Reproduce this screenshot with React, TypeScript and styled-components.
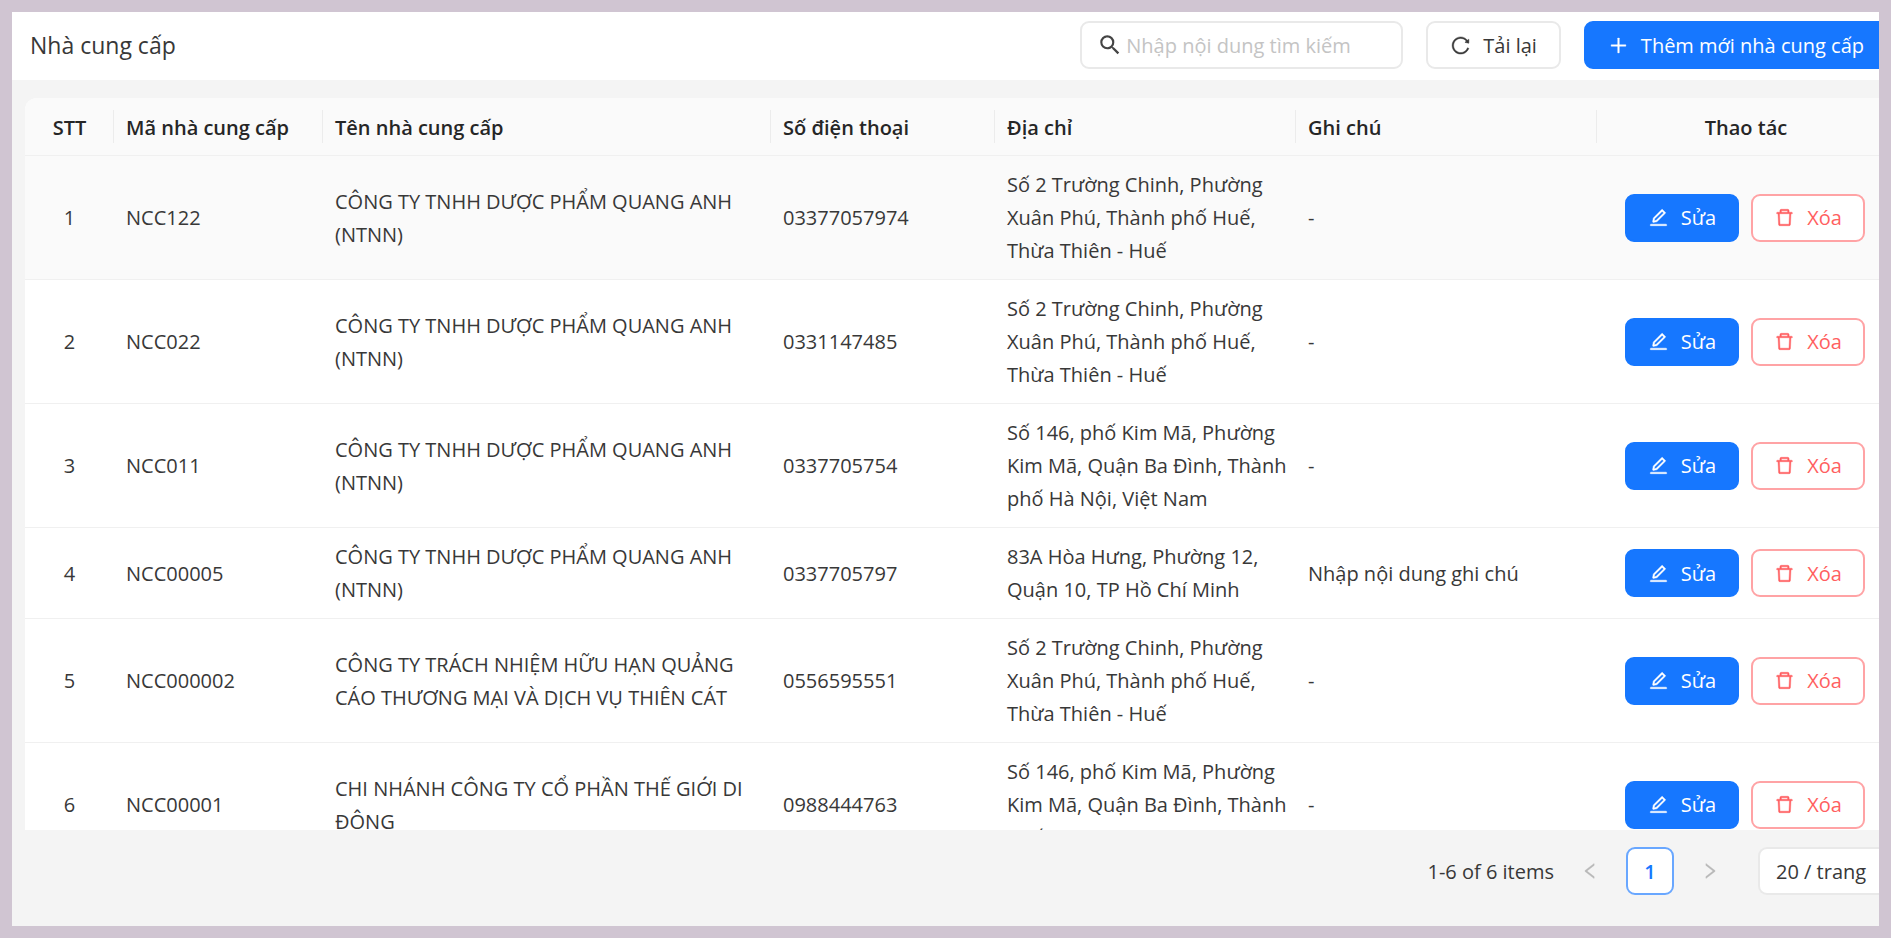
import React from "react";
import styled, { createGlobalStyle, css } from "styled-components";
import {
  AiOutlineDelete,
  AiOutlineEdit,
  AiOutlineLeft,
  AiOutlinePlus,
  AiOutlineReload,
  AiOutlineRight,
} from "react-icons/ai";
import { MdSearch } from "react-icons/md";

const GlobalStyle = createGlobalStyle`
  *, *::before, *::after { box-sizing: border-box; }
  html, body, #root { height: 100%; }
  body {
    margin: 0;
    font-family: "Open Sans", "Noto Sans", sans-serif;
    font-size: 20px;
    line-height: 33px;
    color: #383838;
  }
  button, input, select { font: inherit; color: inherit; }
`;

const Frame = styled.div`
  height: 100%;
  min-height: 480px;
  border: 12px solid #d0c5d2;
  background: #f4f4f4;
  display: flex;
  flex-direction: column;
  overflow: hidden;
`;

const Toolbar = styled.header`
  display: flex;
  align-items: center;
  gap: 23px;
  padding: 9px 0 11px 18px;
  background: #fff;
`;

const Title = styled.h1`
  flex: 1;
  margin: 0;
  font-size: 23px;
  font-weight: 400;
`;

const SearchBox = styled.label`
  display: flex;
  align-items: center;
  gap: 3px;
  width: 323px;
  height: 48px;
  padding: 0 15px;
  border: 2px solid #e9e9e9;
  border-radius: 9px;
  background: #fff;
  svg { flex: none; font-size: 26px; color: #444; }
`;

const SearchInput = styled.input`
  flex: 1;
  min-width: 0;
  padding: 0;
  border: 0;
  outline: 0;
  background: transparent;
  &::placeholder { color: #c4c4c4; opacity: 1; }
`;

const variants = {
  plain: css`
    background: #fff;
    border-color: #e9e9e9;
  `,
  primary: css`
    background: #1677ff;
    border-color: #1677ff;
    color: #fff;
  `,
  danger: css`
    background: #fff;
    border-color: #ffa3a5;
    color: #ff5f61;
  `,
};

const Button = styled.button<{ $variant: keyof typeof variants; $flush?: boolean }>`
  display: inline-flex;
  align-items: center;
  justify-content: center;
  gap: 12px;
  height: 48px;
  padding: 0 20px;
  border: 2px solid;
  border-radius: ${(p) => (p.$flush ? "9px 0 0 9px" : "9px")};
  white-space: nowrap;
  cursor: pointer;
  ${(p) => variants[p.$variant]}
  ${(p) => p.$flush && "padding: 0 13px 0 22px;"}
  svg { flex: none; font-size: 21px; stroke-width: 20px; }
`;

const ReloadButton = styled(Button)`
  padding: 0 22px;
`;

const TableArea = styled.main`
  flex: 1;
  min-height: 0;
  margin: 18px 0 0 13px;
  border-radius: 12px 0 0 0;
  background: #fff;
  overflow: hidden;
`;

const Table = styled.table`
  width: 100%;
  table-layout: fixed;
  border-collapse: separate;
  border-spacing: 0;
`;

const Col = styled.col<{ $width?: number }>`
  ${(p) => p.$width && `width: ${p.$width}px;`}
`;

const HeadCell = styled.th<{ $center?: boolean }>`
  height: 58px;
  padding: 2px 12px 0;
  border-bottom: 1px solid #f0f0f0;
  background: linear-gradient(#ececec, #ececec) right center / 1px 33px no-repeat #fafafa;
  text-align: ${(p) => (p.$center ? "center" : "left")};
  font-weight: 600;
  color: #262626;
  &:last-child {
    padding: 2px 12px 0 28px;
    background: #fafafa;
  }
`;

const Row = styled.tr<{ $active?: boolean }>`
  background: ${(p) => (p.$active ? "#fafafa" : "#fff")};
`;

const Cell = styled.td<{ $center?: boolean }>`
  padding: ${(p) => (p.$center ? "12px" : "12px 4px 12px 12px")};
  border-bottom: 1px solid #f0f0f0;
  text-align: ${(p) => (p.$center ? "center" : "left")};
  vertical-align: middle;
`;

const ActionCell = styled(Cell)`
  padding: 0 14px 0 28px;
`;

const Actions = styled.div`
  display: grid;
  grid-template-columns: 1fr 1fr;
  gap: 12px;
`;

const Footer = styled.footer`
  display: flex;
  align-items: center;
  justify-content: flex-end;
  gap: 12px;
  padding: 17px 0 31px;
`;

const Total = styled.span`
  white-space: nowrap;
`;

const PageButton = styled.button<{ $current?: boolean }>`
  display: flex;
  align-items: center;
  justify-content: center;
  width: 48px;
  height: 48px;
  padding: 0;
  border: 2px solid ${(p) => (p.$current ? "#69a7ff" : "transparent")};
  border-radius: 9px;
  background: ${(p) => (p.$current ? "#fff" : "transparent")};
  color: ${(p) => (p.$current ? "#1677ff" : "#b8b8b8")};
  font-weight: ${(p) => (p.$current ? 600 : 400)};
  svg { font-size: 20px; stroke-width: 20px; }
`;

const PageSize = styled.select`
  width: 121px;
  height: 48px;
  margin-left: 12px;
  padding: 0 0 0 16px;
  border: 2px solid #e9e9e9;
  border-right: 0;
  border-radius: 9px 0 0 9px;
  background: #fff;
  appearance: none;
`;

const QUANG_ANH = "CÔNG TY TNHH DƯỢC PHẨM QUANG ANH (NTNN)";
const HUE = "Số 2 Trường Chinh, Phường Xuân Phú, Thành phố Huế, Thừa Thiên - Huế";
const HA_NOI = "Số 146, phố Kim Mã, Phường Kim Mã, Quận Ba Đình, Thành phố Hà Nội, Việt Nam";

const suppliers = [
  { code: "NCC122", name: QUANG_ANH, phone: "03377057974", address: HUE, note: "-" },
  { code: "NCC022", name: QUANG_ANH, phone: "0331147485", address: HUE, note: "-" },
  { code: "NCC011", name: QUANG_ANH, phone: "0337705754", address: HA_NOI, note: "-" },
  {
    code: "NCC00005",
    name: QUANG_ANH,
    phone: "0337705797",
    address: "83A Hòa Hưng, Phường 12, Quận 10, TP Hồ Chí Minh",
    note: "Nhập nội dung ghi chú",
  },
  {
    code: "NCC000002",
    name: "CÔNG TY TRÁCH NHIỆM HỮU HẠN QUẢNG CÁO THƯƠNG MẠI VÀ DỊCH VỤ THIÊN CÁT",
    phone: "0556595551",
    address: HUE,
    note: "-",
  },
  {
    code: "NCC00001",
    name: "CHI NHÁNH CÔNG TY CỔ PHẦN THẾ GIỚI DI ĐỘNG",
    phone: "0988444763",
    address: HA_NOI,
    note: "-",
  },
];

export default function App() {
  return (
    <>
      <GlobalStyle />
      <Frame>
        <Toolbar>
          <Title>Nhà cung cấp</Title>
          <SearchBox>
            <MdSearch aria-hidden />
            <SearchInput type="text" aria-label="Tìm kiếm" placeholder="Nhập nội dung tìm kiếm" />
          </SearchBox>
          <ReloadButton type="button" $variant="plain">
            <AiOutlineReload aria-hidden />
            Tải lại
          </ReloadButton>
          <Button type="button" $variant="primary" $flush>
            <AiOutlinePlus aria-hidden />
            Thêm mới nhà cung cấp
          </Button>
        </Toolbar>

        <TableArea>
          <Table>
            <colgroup>
              <Col $width={89} />
              <Col $width={209} />
              <Col $width={448} />
              <Col $width={224} />
              <Col $width={301} />
              <Col />
              <Col $width={282} />
            </colgroup>
            <thead>
              <tr>
                <HeadCell scope="col" $center>STT</HeadCell>
                <HeadCell scope="col">Mã nhà cung cấp</HeadCell>
                <HeadCell scope="col">Tên nhà cung cấp</HeadCell>
                <HeadCell scope="col">Số điện thoại</HeadCell>
                <HeadCell scope="col">Địa chỉ</HeadCell>
                <HeadCell scope="col">Ghi chú</HeadCell>
                <HeadCell scope="col" $center>Thao tác</HeadCell>
              </tr>
            </thead>
            <tbody>
              {suppliers.map((s, i) => (
                <Row key={s.code} $active={i === 0}>
                  <Cell $center>{i + 1}</Cell>
                  <Cell>{s.code}</Cell>
                  <Cell>{s.name}</Cell>
                  <Cell>{s.phone}</Cell>
                  <Cell>{s.address}</Cell>
                  <Cell>{s.note}</Cell>
                  <ActionCell>
                    <Actions>
                      <Button type="button" $variant="primary">
                        <AiOutlineEdit aria-hidden />
                        Sửa
                      </Button>
                      <Button type="button" $variant="danger">
                        <AiOutlineDelete aria-hidden />
                        Xóa
                      </Button>
                    </Actions>
                  </ActionCell>
                </Row>
              ))}
            </tbody>
          </Table>
        </TableArea>

        <Footer>
          <Total>1-6 of 6 items</Total>
          <PageButton type="button" aria-label="Trang trước">
            <AiOutlineLeft aria-hidden />
          </PageButton>
          <PageButton type="button" $current>1</PageButton>
          <PageButton type="button" aria-label="Trang sau">
            <AiOutlineRight aria-hidden />
          </PageButton>
          <PageSize aria-label="Số dòng mỗi trang" defaultValue="20">
            <option value="20">20 / trang</option>
          </PageSize>
        </Footer>
      </Frame>
    </>
  );
}
